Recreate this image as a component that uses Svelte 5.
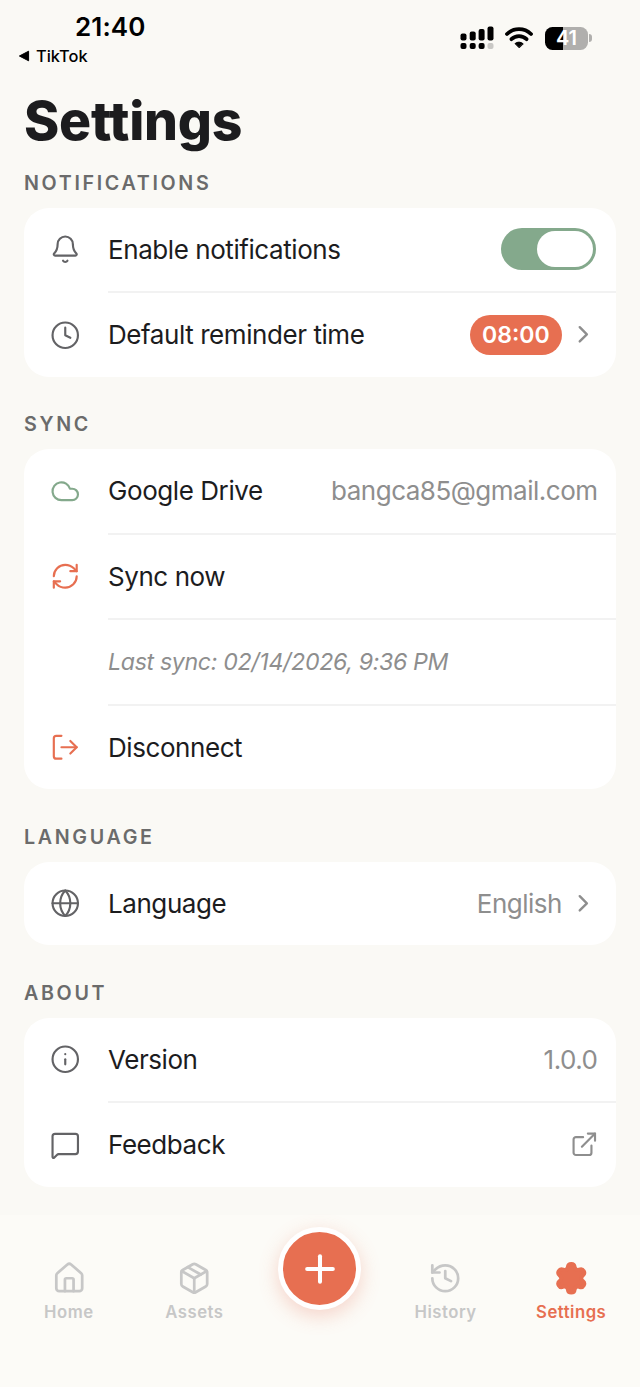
<script lang="ts">
  type Row = {
    label: string;
    icon?: string;
    tone?: "green" | "orange";
    kind?: "toggle" | "time" | "note";
    value?: string;
    trailing?: "chevron" | "external";
  };

  type Section = { title: string; rows: Row[] };

  const icons: Record<string, string[]> = {
    bell: [
      "M10.268 21a2 2 0 0 0 3.464 0",
      "M3.262 15.326A1 1 0 0 0 4 17h16a1 1 0 0 0 .74-1.673C19.41 13.956 18 12.499 18 8A6 6 0 0 0 6 8c0 4.499-1.411 5.956-2.738 7.326",
    ],
    clock: ["M12 2a10 10 0 1 0 0 20a10 10 0 1 0 0-20", "M12 6v6l4 2"],
    cloud: ["M17.5 19H9a7 7 0 1 1 6.71-9h1.79a4.5 4.5 0 1 1 0 9Z"],
    sync: [
      "M3 12a9 9 0 0 1 9-9 9.75 9.75 0 0 1 6.74 2.74L21 8",
      "M21 3v5h-5",
      "M21 12a9 9 0 0 1-9 9 9.75 9.75 0 0 1-6.74-2.74L3 16",
      "M8 16H3v5",
    ],
    logout: ["M9 21H5a2 2 0 0 1-2-2V5a2 2 0 0 1 2-2h4", "m16 17 5-5-5-5", "M21 12H9"],
    globe: [
      "M12 2a10 10 0 1 0 0 20a10 10 0 1 0 0-20",
      "M12 2a14.5 14.5 0 0 0 0 20 14.5 14.5 0 0 0 0-20",
      "M2 12h20",
    ],
    info: ["M12 2a10 10 0 1 0 0 20a10 10 0 1 0 0-20", "M12 16v-4", "M12 8h.01"],
    message: [
      "M22 17a2 2 0 0 1-2 2H6.828a2 2 0 0 0-1.414.586l-2.202 2.202A.71.71 0 0 1 2 21.286V5a2 2 0 0 1 2-2h16a2 2 0 0 1 2 2z",
    ],
    chevron: ["m9 18 6-6-6-6"],
    external: ["M15 3h6v6", "M10 14 21 3", "M18 13v6a2 2 0 0 1-2 2H5a2 2 0 0 1-2-2V8a2 2 0 0 1 2-2h6"],
    home: [
      "M15 21v-8a1 1 0 0 0-1-1h-4a1 1 0 0 0-1 1v8",
      "M3 10a2 2 0 0 1 .709-1.528l7-5.999a2 2 0 0 1 2.582 0l7 5.999A2 2 0 0 1 21 10v9a2 2 0 0 1-2 2H5a2 2 0 0 1-2-2z",
    ],
    box: [
      "M11 21.73a2 2 0 0 0 2 0l7-4A2 2 0 0 0 21 16V8a2 2 0 0 0-1-1.73l-7-4a2 2 0 0 0-2 0l-7 4A2 2 0 0 0 3 8v8a2 2 0 0 0 1 1.73z",
      "M12 22V12",
      "M3.29 7 12 12l8.71-5",
      "m7.5 4.27 9 5.15",
    ],
    history: ["M3 12a9 9 0 1 0 9-9 9.75 9.75 0 0 0-6.74 2.74L3 8", "M3 3v5h5", "M12 7v5l4 2"],
    settings: [
      "M9.671 4.136a2.34 2.34 0 0 1 4.659 0 2.34 2.34 0 0 0 3.319 1.915 2.34 2.34 0 0 1 2.33 4.033 2.34 2.34 0 0 0 0 3.831 2.34 2.34 0 0 1-2.33 4.033 2.34 2.34 0 0 0-3.319 1.915 2.34 2.34 0 0 1-4.659 0 2.34 2.34 0 0 0-3.32-1.915 2.34 2.34 0 0 1-2.33-4.033 2.34 2.34 0 0 0 0-3.831A2.34 2.34 0 0 1 6.35 6.051a2.34 2.34 0 0 0 3.319-1.915",
    ],
    plus: ["M5 12h14", "M12 5v14"],
  };

  const sections: Section[] = [
    {
      title: "Notifications",
      rows: [
        { label: "Enable notifications", icon: "bell", kind: "toggle" },
        { label: "Default reminder time", icon: "clock", kind: "time", value: "08:00", trailing: "chevron" },
      ],
    },
    {
      title: "Sync",
      rows: [
        { label: "Google Drive", icon: "cloud", tone: "green", value: "bangca85@gmail.com" },
        { label: "Sync now", icon: "sync", tone: "orange" },
        { label: "Last sync: 02/14/2026, 9:36 PM", kind: "note" },
        { label: "Disconnect", icon: "logout", tone: "orange" },
      ],
    },
    {
      title: "Language",
      rows: [{ label: "Language", icon: "globe", value: "English", trailing: "chevron" }],
    },
    {
      title: "About",
      rows: [
        { label: "Version", icon: "info", value: "1.0.0" },
        { label: "Feedback", icon: "message", trailing: "external" },
      ],
    },
  ];

  const tabs = [
    { label: "Home", icon: "home" },
    { label: "Assets", icon: "box" },
    { label: "", icon: "plus" },
    { label: "History", icon: "history" },
    { label: "Settings", icon: "settings" },
  ];

  let enabled = $state(true);
  let active = $state("Settings");
</script>

{#snippet icon(name: string)}
  <svg class="icon" viewBox="0 0 24 24" aria-hidden="true">
    {#each icons[name] as d}
      <path {d} />
    {/each}
  </svg>
{/snippet}

<div class="screen">
  <header class="status">
    <div class="status-left">
      <div class="clock">21:40</div>
      <div class="back">
        <svg width="12" height="12" viewBox="0 0 12 12"><path d="M1.4 6 10.6 1.2v9.6z" stroke="#000" stroke-linejoin="round" /></svg>
        <span>TikTok</span>
      </div>
    </div>
    <div class="status-right">
      <svg width="34" height="24" viewBox="0 0 34 24">
        <rect x="0.5" y="7.5" width="6" height="7" rx="2" />
        <rect x="9.7" y="5.5" width="6" height="9" rx="2" />
        <rect x="18.6" y="3" width="6" height="11.5" rx="2" />
        <rect x="27.5" y="0.5" width="6" height="14" rx="2" />
        <rect x="0.5" y="17" width="6" height="6" rx="2" />
        <rect x="9.7" y="17" width="6" height="6" rx="2" />
        <rect x="18.6" y="17" width="6" height="6" rx="2" />
        <rect x="27.5" y="17" width="6" height="6" rx="2" fill="#c9c8c5" />
      </svg>
      <svg class="wifi" width="28" height="22" viewBox="0 0 28 22">
        <path d="M2 7a17.3 17.3 0 0 1 24 0" />
        <path d="M6.4 12.2a11 11 0 0 1 15.2 0" />
        <path class="dot" d="M14 20.6 10 16.6a6 6 0 0 1 8 0z" />
      </svg>
      <div class="battery"><span>41</span></div>
      <div class="battery-cap"></div>
    </div>
  </header>

  <main>
    <h1>Settings</h1>
    {#each sections as section}
      <section>
        <h2>{section.title}</h2>
        <div class="card">
          {#each section.rows as row}
            <div class="row">
              <div class="lead {row.tone ?? ''}">
                {#if row.icon}{@render icon(row.icon)}{/if}
              </div>
              <div class="body">
                <span class="label" class:note={row.kind === "note"}>{row.label}</span>
                {#if row.kind === "toggle"}
                  <button
                    class="toggle"
                    class:on={enabled}
                    aria-label={row.label}
                    onclick={() => (enabled = !enabled)}
                  >
                    <span class="thumb"></span>
                  </button>
                {:else if row.kind === "time"}
                  <span class="pill">{row.value}</span>
                {:else if row.value}
                  <span class="value" class:linked={row.trailing}>{row.value}</span>
                {/if}
                {#if row.trailing}
                  <span class="trail {row.trailing}">{@render icon(row.trailing)}</span>
                {/if}
              </div>
            </div>
          {/each}
        </div>
      </section>
    {/each}
  </main>

  <nav>
    {#each tabs as tab}
      {#if tab.label}
        <button class="tab" class:active={active === tab.label} onclick={() => (active = tab.label)}>
          {@render icon(tab.icon)}
          <span>{tab.label}</span>
        </button>
      {:else}
        <div class="add-slot">
          <button class="add" aria-label="Add">{@render icon(tab.icon)}</button>
        </div>
      {/if}
    {/each}
  </nav>
</div>

<style>
  :global(body) {
    margin: 0;
    background: #faf9f5;
  }

  .screen {
    width: 640px;
    height: 1387px;
    display: flex;
    flex-direction: column;
    overflow: hidden;
    background: #faf9f5;
    color: #1c1c1e;
    font-family: Inter, "Liberation Sans", sans-serif;
  }

  button {
    font: inherit;
    border: 0;
    padding: 0;
    background: none;
    cursor: pointer;
  }

  .icon {
    display: block;
    width: 30.5px;
    height: 30.5px;
    fill: none;
    stroke: currentColor;
    stroke-width: 1.7;
    stroke-linecap: round;
    stroke-linejoin: round;
  }

  .status {
    display: flex;
    justify-content: space-between;
    height: 88px;
    flex-shrink: 0;
    color: #000;
  }

  .status-left {
    padding: 11px 0 0 18px;
  }

  .clock {
    padding-left: 57px;
    font-size: 26px;
    line-height: 32px;
    font-weight: 600;
    letter-spacing: 0.1px;
  }

  .back {
    display: flex;
    align-items: center;
    gap: 6px;
    margin-top: 3px;
    font-size: 16.4px;
    line-height: 20px;
    font-weight: 500;
  }

  .status-right {
    display: flex;
    align-items: center;
    height: 24px;
    padding: 26px 48px 0 0;
  }

  .wifi {
    margin: 0 12px 0 11px;
    fill: none;
    stroke: #000;
    stroke-width: 3.8;
    stroke-linecap: round;
  }

  .wifi .dot {
    fill: #000;
    stroke-width: 1;
    stroke-linejoin: round;
  }

  .battery {
    width: 43px;
    height: 23px;
    border-radius: 7.5px;
    background: linear-gradient(90deg, #000 41%, #b0afad 41%);
    color: #fff;
    font-size: 20px;
    line-height: 23px;
    font-weight: 600;
    text-align: center;
  }

  .battery-cap {
    width: 3px;
    height: 8px;
    margin-left: 1px;
    border-radius: 0 3px 3px 0;
    background: #b0afad;
  }

  main {
    padding: 0 24px;
    flex: 1;
    min-height: 0;
  }

  h1 {
    margin: 0;
    height: 79.5px;
    font-size: 53.5px;
    line-height: 66px;
    font-weight: 800;
    letter-spacing: -0.25px;
  }

  h2 {
    margin: 0;
    height: 40px;
    font-size: 19.7px;
    line-height: 31.5px;
    font-weight: 600;
    letter-spacing: 2.65px;
    text-transform: uppercase;
    color: #6b6b6b;
  }

  section {
    margin-bottom: 32.5px;
  }

  .card {
    border-radius: 25px;
    background: #fff;
    overflow: hidden;
  }

  .row {
    display: flex;
  }

  .lead {
    width: 84px;
    height: 83.5px;
    display: flex;
    align-items: center;
    justify-content: center;
    box-sizing: border-box;
    padding-right: 1px;
    color: #636366;
  }

  .green {
    color: #84a98c;
  }

  .orange {
    color: #e76f51;
  }

  .body {
    flex: 1;
    display: flex;
    align-items: center;
    height: 83.5px;
    padding-right: 18.5px;
  }

  .row:not(:last-child) .body {
    border-bottom: 2px solid #f2f2f2;
  }

  .label {
    flex: 1;
    font-size: 26px;
    letter-spacing: -0.43px;
    white-space: nowrap;
  }

  .note {
    font-size: 23.2px;
    letter-spacing: -0.35px;
    font-style: italic;
    color: #8e8e8e;
  }

  .value {
    font-size: 26px;
    letter-spacing: -0.5px;
    color: #8e8e8e;
  }

  .linked {
    margin-right: 7px;
  }

  .trail {
    color: #8e8e8e;
  }

  .trail .icon {
    width: 28.6px;
    height: 28.6px;
  }

  .chevron .icon {
    stroke-width: 2;
  }

  .external .icon {
    stroke-width: 1.8;
    margin-right: -1px;
  }

  .toggle {
    width: 94.5px;
    height: 42px;
    box-sizing: border-box;
    padding: 3px;
    margin-right: 2px;
    display: flex;
    border-radius: 21px;
    background: #d1d1d6;
  }

  .toggle.on {
    justify-content: flex-end;
    background: #84a98c;
  }

  .thumb {
    width: 56px;
    height: 36px;
    border-radius: 18px;
    background: #fff;
  }

  .pill {
    width: 92px;
    height: 40.5px;
    margin-right: 7px;
    border-radius: 20.5px;
    background: #e76f51;
    color: #fff;
    font-size: 23px;
    line-height: 40.5px;
    font-weight: 600;
    text-align: center;
  }

  nav {
    display: flex;
    height: 172px;
    flex-shrink: 0;
    padding: 0 6px;
    background: #fcfbf7;
  }

  .tab {
    flex: 1;
    display: flex;
    flex-direction: column;
    align-items: center;
    padding-top: 45.5px;
    gap: 5.5px;
    color: #c7c7c7;
    font-size: 16.7px;
    line-height: 22px;
    font-weight: 600;
    letter-spacing: 0.5px;
  }

  .tab .icon {
    width: 34.5px;
    height: 34.5px;
    stroke-width: 1.9;
  }

  .tab.active {
    color: #e76f51;
  }

  .tab.active .icon {
    fill: currentColor;
    stroke-width: 2.8;
  }

  .add-slot {
    flex: 1;
    display: flex;
    justify-content: center;
    padding-top: 12px;
  }

  .add {
    width: 83px;
    height: 83px;
    box-sizing: border-box;
    display: grid;
    place-items: center;
    border: 5.5px solid #fff;
    border-radius: 50%;
    background: #e76f51;
    color: #fff;
    box-shadow: 0 6px 19px rgba(231, 111, 81, 0.28);
  }

  .add .icon {
    width: 44px;
    height: 44px;
    stroke-width: 2.2;
  }
</style>
